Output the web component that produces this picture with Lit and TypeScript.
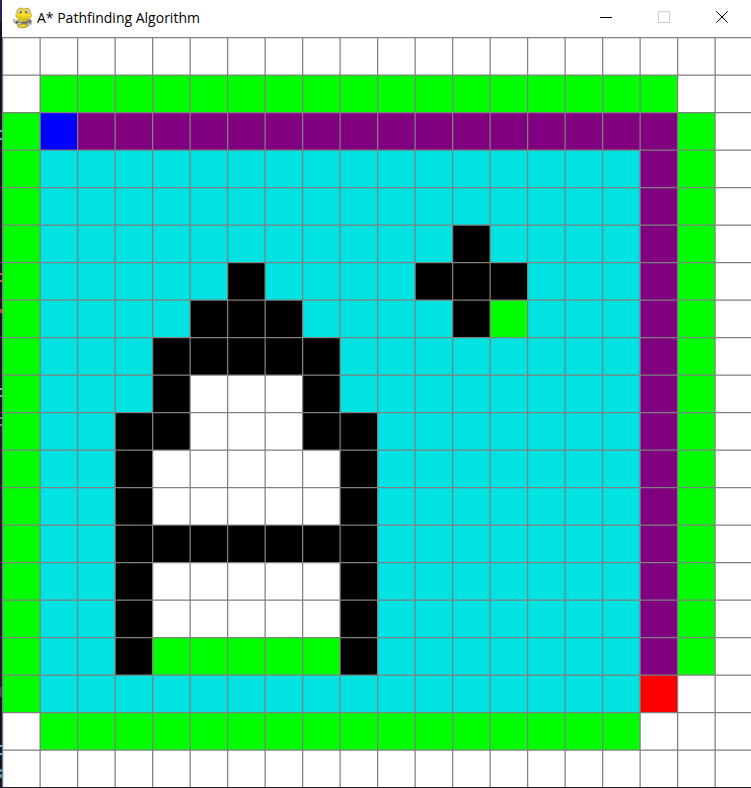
import { LitElement, html, css, svg } from "lit";
import { customElement, property } from "lit/decorators.js";

// One letter per cell: . empty, o open, c closed, # barrier, p path, s start, e end
const MAP = [
  "....................",
  ".ooooooooooooooooo..",
  "osppppppppppppppppo.",
  "occccccccccccccccpo.",
  "occccccccccccccccpo.",
  "occccccccccc#ccccpo.",
  "occccc#cccc###cccpo.",
  "occcc###cccc#occcpo.",
  "occc#####ccccccccpo.",
  "occc#...#ccccccccpo.",
  "occ##...##cccccccpo.",
  "occ#.....#cccccccpo.",
  "occ#.....#cccccccpo.",
  "occ#######cccccccpo.",
  "occ#.....#cccccccpo.",
  "occ#.....#cccccccpo.",
  "occ#ooooo#cccccccpo.",
  "occcccccccccccccce..",
  ".oooooooooooooooo...",
  "....................",
];

const KIND: Record<string, string> = {
  ".": "empty",
  o: "open",
  c: "closed",
  "#": "barrier",
  p: "path",
  s: "start",
  e: "end",
};

// Board units per cell; the ruling is one unit thick
const CELL = 30;

@customElement("title-bar")
class TitleBar extends LitElement {
  @property() heading = "";

  static styles = css`
    :host {
      display: flex;
      align-items: center;
      box-sizing: border-box;
      height: 37px;
      padding: 0 0 2px 11px;
      background: #fff;
      color: #000;
      font-family: "Open Sans", "Noto Sans", sans-serif;
    }
    .logo {
      width: 20px;
      height: 22px;
      flex: none;
    }
    .heading {
      flex: 1;
      margin: 0 0 0 4px;
      font-size: 14px;
      line-height: 21px;
      font-weight: 400;
      white-space: nowrap;
      overflow: hidden;
    }
    .control {
      display: flex;
      align-items: center;
      justify-content: center;
      width: 58px;
      height: 35px;
      padding: 0 0 1px;
      border: 0;
      background: none;
      color: #000;
    }
    .control:disabled {
      color: #ccc;
    }
    .glyph {
      width: 12px;
      height: 12px;
      fill: none;
      stroke: currentColor;
    }
  `;

  private control(label: string, shape: unknown, disabled = false) {
    return html`<button class="control" aria-label=${label} ?disabled=${disabled}>
      <svg class="glyph" viewBox="0 0 12 12">${shape}</svg>
    </button>`;
  }

  render() {
    return html`
      <svg class="logo" viewBox="0 0 20 22" aria-hidden="true">
        <path d="M6 12h9l1 4-2 4-4 1-5-1-1-4z" fill="#ecd21a" stroke="#8f8430" stroke-width=".7" />
        <path
          d="M4 5c0-3 2-4 4-4 2 0 2 1 3 1s2-1 3-1c2 0 3 2 3 4 1 1 2 3 1 5-1 2-3 2-5 2l-3 1-3-1c-2 0-4-1-4-3 0-2 0-3 1-4z"
          fill="#f8de1c"
          stroke="#a39636"
          stroke-width=".7"
        />
        <ellipse cx="7" cy="4.500" rx="2" ry="2.300" fill="#f5f3df" stroke="#9d955a" stroke-width=".6" />
        <ellipse cx="14" cy="4.500" rx="2" ry="2.300" fill="#f5f3df" stroke="#9d955a" stroke-width=".6" />
        <circle cx="7.500" cy="5" r=".9" fill="#333" />
        <circle cx="13.500" cy="5" r=".9" fill="#333" />
        <path d="M5 9.500q5.500 2.500 11 0" fill="none" stroke="#c9af16" stroke-width=".8" />
        <path d="M0 12l4 1 3 2 6-1 4-2 2 2-1 4-3 1-4-2-5 1-5-2z" fill="#8d8d8a" />
        <path d="M1 13l2 1M5 17l2-1M15 17l2 1" fill="none" stroke="#d8d8d4" stroke-width="1.500" />
        <path d="M3 16l3-1M9 15l3 1 1-1M16 13l2 2" fill="none" stroke="#55554f" />
        <path d="M13 14.500h1.500" stroke="#c04040" />
      </svg>
      <h1 class="heading">${this.heading}</h1>
      ${this.control("Minimize", svg`<path d="M0 6.500h12" />`)}
      ${this.control("Maximize", svg`<rect x=".5" y=".5" width="11" height="11" />`, true)}
      ${this.control("Close", svg`<path d="M.3 .3l11.400 11.400M11.700 .3L.3 11.700" />`)}
    `;
  }
}

@customElement("path-grid")
class PathGrid extends LitElement {
  @property({ attribute: false }) rows: string[] = [];

  static styles = css`
    :host {
      display: block;
      position: relative;
    }
    .board {
      display: grid;
      grid-template-columns: repeat(20, 1fr);
      grid-template-rows: repeat(20, 1fr);
      aspect-ratio: 1;
    }
    .ruling {
      position: absolute;
      inset: 0;
      width: 100%;
      height: 100%;
      fill: none;
      stroke: #808080;
    }
    .empty { background: #fff; }
    .open { background: #0f0; }
    .closed { background: #00e3e3; }
    .barrier { background: #000; }
    .path { background: #800080; }
    .start { background: #00f; }
    .end { background: #f00; }
  `;

  render() {
    const size = this.rows.length * CELL;
    return html`<div class="board" role="img" aria-label="Search grid">
        ${this.rows.map((row) => [...row].map((c) => html`<div class=${KIND[c]}></div>`))}
      </div>
      <svg class="ruling" viewBox="0 0 ${size} ${size}" aria-hidden="true">
        ${this.rows.map((_, i) => {
          const at = i * CELL + 0.5;
          return svg`<path d="M${at} 0V${size}M0 ${at}H${size}" />`;
        })}
      </svg>`;
  }
}

@customElement("app-root")
class AppRoot extends LitElement {
  static styles = css`
    :host {
      display: grid;
      grid-template-columns: 2px 1fr;
      overflow: hidden;
      background: #1e1e28;
      padding-bottom: 1px;
    }
    .backdrop {
      background: linear-gradient(
        #23235a 0 20px, #15152a 24px 130px,
        #58b8d0 130px 132px, #15152a 132px 138px,
        #58b8d0 138px 140px, #15152a 140px 273px,
        #d85040 273px 275px, #15152a 275px 280px,
        #d85040 280px 282px, #15152a 282px 309px,
        #c84040 309px 313px, #15152a 313px 388px,
        #70b0c8 388px 390px, #15152a 390px 395px,
        #70b0c8 395px 397px, #15152a 397px 417px,
        #7078a0 417px 419px, #15152a 419px 424px,
        #7078a0 424px 426px, #1e1e30 426px 687px,
        #44405c 687px 697px, #15152a 697px 745px,
        #58b8d0 745px 747px, #15152a 747px 753px,
        #58b8d0 753px 755px, #15152a 755px 769px,
        #4898a8 769px 772px, #15152a 772px 774px,
        #4898a8 774px 778px, #15152a 778px
      );
    }
    .board {
      margin-right: -1px;
    }
  `;

  render() {
    return html`
      <div class="backdrop"></div>
      <main>
        <title-bar heading="A* Pathfinding Algorithm"></title-bar>
        <path-grid class="board" .rows=${MAP}></path-grid>
      </main>
    `;
  }
}
